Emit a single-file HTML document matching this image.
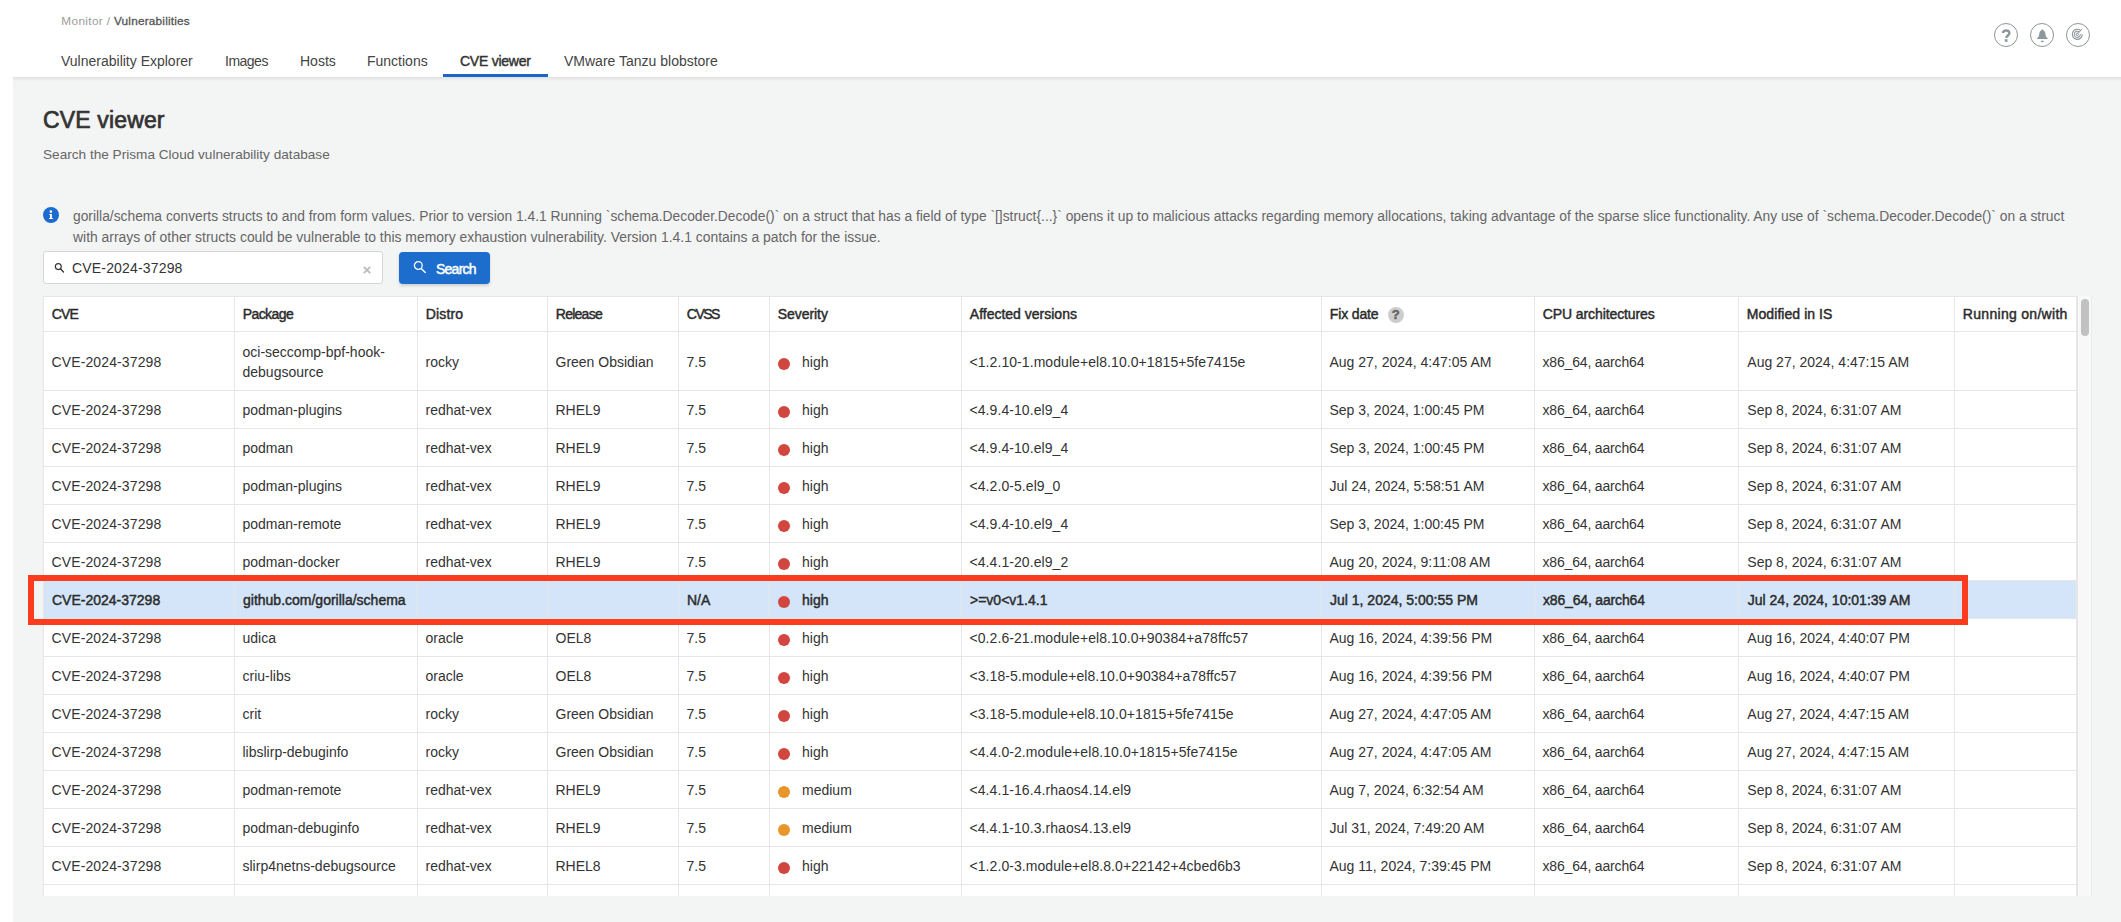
<!DOCTYPE html>
<html><head><meta charset="utf-8">
<style>
*{box-sizing:border-box}
html,body{margin:0;padding:0;width:2121px;height:922px;overflow:hidden;background:#fff;font-family:"Liberation Sans",sans-serif;color:#333;-webkit-font-smoothing:antialiased}
#hdr{position:absolute;left:0;top:0;width:2121px;height:77px;background:#fff;z-index:2}
#shadow{position:absolute;left:13px;top:77px;width:2108px;height:4px;background:linear-gradient(#dfe1e1,rgba(243,244,244,0));z-index:2}
#content{position:absolute;left:13px;top:77px;width:2108px;height:845px;background:#f3f4f4}
.abs{position:absolute;white-space:nowrap}
.crumb{left:61.3px;top:13.5px;font-size:11.8px;color:#9b9b9b;line-height:14px}
.crumb b{color:#555;font-weight:normal;-webkit-text-stroke:0.3px #555;letter-spacing:0.2px}
.tab{top:53px;font-size:14px;color:#444;line-height:16px}
.tab.act{font-weight:normal;color:#333;-webkit-text-stroke:0.45px #333;letter-spacing:-0.25px}
#uline{position:absolute;left:443px;top:74px;width:105px;height:3px;background:#1a66c9;z-index:3}
.ic{position:absolute;top:23px}
.title{left:43px;top:106px;font-size:23px;font-weight:normal;-webkit-text-stroke:0.7px #333;color:#333;line-height:28px;letter-spacing:0.15px}
.sub{left:43px;top:146.5px;font-size:13.62px;color:#666;line-height:16px}
.msg{left:73px;font-size:13.82px;color:#666;line-height:16px}
#inp{position:absolute;left:43px;top:251px;width:340px;height:33px;background:#fff;border:1px solid #d5d5d5;border-radius:3px}
#btn{position:absolute;left:399px;top:252px;width:91px;height:32px;background:#1d6ecc;border-radius:4px;box-shadow:0 2px 3px rgba(0,0,0,.15)}
#tbl{position:absolute;left:43px;top:296px;width:2034px;height:600px;overflow:hidden;background:#fff}
#tblin{position:absolute;left:-43px;top:-296px;width:2121px;height:922px}
.vl{position:absolute;top:296px;width:1px;height:700px;background:#e6e6e6}
.hl{position:absolute;left:43px;width:2034px;height:1px;background:#e6e6e6}
.th{position:absolute;top:306.4px;font-size:14px;font-weight:normal;-webkit-text-stroke:0.45px #2b2b2b;color:#2b2b2b;line-height:16px;white-space:nowrap}
.td{position:absolute;display:flex;align-items:center;padding-top:2px;font-size:14px;color:#333;white-space:nowrap;line-height:20px}
.td.hi{font-weight:normal;-webkit-text-stroke:0.45px #2b2b2b;color:#2b2b2b}
.hibg{position:absolute;left:44px;width:2032px;background:#d4e5f9}
.dot{position:absolute;width:12px;height:12px;border-radius:50%;background:#d2463f}
.dot.med{background:#e8962a}
.qm{position:absolute;left:58px;-webkit-text-stroke:0.5px #666;top:0.6px;width:16px;height:16px;border-radius:50%;background:#cdcdcd;color:#666;font-weight:bold;font-size:13px;font-style:normal;text-align:center;line-height:16px;letter-spacing:0}
#red{position:absolute;left:28px;top:575px;width:1940px;height:50px;border:6px solid #fd3c1f;z-index:5}
#sbtrack{position:absolute;left:2077px;top:296px;width:15px;height:600px;background:#f8f8f8;border-left:1px solid #e6e6e6;border-right:1px solid #ececec}
#sbthumb{position:absolute;left:2081px;top:299px;width:8px;height:37px;background:#c1c1c1;border-radius:4px}
#tblborder{position:absolute;left:43px;top:296px;width:2034px;height:700px;border:1px solid #e6e6e6;pointer-events:none}
</style></head><body>
<div id="content"></div>
<div id="hdr">
  <div class="abs crumb"><span style="letter-spacing:0.35px">Monitor / </span><b>Vulnerabilities</b></div>
  <div class="abs tab" style="left:61px">Vulnerability Explorer</div>
  <div class="abs tab" style="left:225px;letter-spacing:-0.5px">Images</div>
  <div class="abs tab" style="left:300px">Hosts</div>
  <div class="abs tab" style="left:367px">Functions</div>
  <div class="abs tab act" style="left:460px">CVE viewer</div>
  <div class="abs tab" style="left:564px">VMware Tanzu blobstore</div>
  <svg class="ic" style="left:1994px" width="24" height="24" viewBox="0 0 24 24"><circle cx="12" cy="12" r="11.5" fill="none" stroke="#8c9597" stroke-width="1"/><path d="M8.9 10.0 C9.3 8.3 10.6 7.6 12.2 7.6 C14.3 7.6 15.3 8.8 15.3 10.2 C15.3 12.3 12.6 12.5 12.2 14.9" fill="none" stroke="#8e979a" stroke-width="2.5"/><rect x="10.8" y="16.2" width="2.7" height="2.6" fill="#8e979a"/></svg>
  <svg class="ic" style="left:2030px" width="24" height="24" viewBox="0 0 24 24"><circle cx="12" cy="12" r="11.5" fill="none" stroke="#8c9597" stroke-width="1"/><path d="M12.3 6.6 C11.6 6.6 11.3 7.2 11.1 7.6 C9.9 8.0 9.5 9.2 9.3 10.8 L8.9 13.3 L7 15.5 L7 16.1 L17.7 16.1 L17.7 15.5 L15.8 13.3 L15.4 10.8 C15.2 9.2 14.8 8.0 13.6 7.6 C13.4 7.2 13.1 6.6 12.3 6.6 Z" fill="#8e979a"/><path d="M10.8 17.7 h3.0 v0.2 c0 1.9 -3.0 1.9 -3.0 0 z" fill="#8e979a"/></svg>
  <svg class="ic" style="left:2066px" width="24" height="24" viewBox="0 0 24 24"><circle cx="12" cy="12" r="11.5" fill="none" stroke="#8c9597" stroke-width="1"/><g fill="none" stroke="#8e979a"><path stroke-width="1.15" d="M16.3 11.3 A5.0 5.0 0 1 1 14.51 7.47"/><path stroke-width="1.05" d="M14.4 11.3 A3.1 3.1 0 1 1 13.29 8.93"/><path stroke-width="0.95" d="M12.6 11.3 A1.3 1.3 0 1 1 12.14 10.3"/><path stroke-width="1" d="M11.3 11.3 L16.1 5.9"/></g></svg>
</div>
<div id="uline"></div>
<div id="shadow"></div>
<div class="abs title">CVE viewer</div>
<div class="abs sub">Search the Prisma Cloud vulnerability database</div>
<svg style="position:absolute;left:43px;top:207px" width="16" height="16" viewBox="0 0 16 16"><circle cx="8" cy="8" r="8" fill="#1c6cd0"/><circle cx="7.9" cy="4.6" r="1.3" fill="#fff"/><path d="M6.3 7 H8.9 V11 H9.9 V12.1 H6 V11 H7 V8.1 H6.3 Z" fill="#fff"/></svg>
<div class="abs msg" style="top:208px">gorilla/schema converts structs to and from form values. Prior to version 1.4.1 Running `schema.Decoder.Decode()` on a struct that has a field of type `[]struct{...}` opens it up to malicious attacks regarding memory allocations, taking advantage of the sparse slice functionality. Any use of `schema.Decoder.Decode()` on a struct</div>
<div class="abs msg" style="top:229px;font-size:13.91px">with arrays of other structs could be vulnerable to this memory exhaustion vulnerability. Version 1.4.1 contains a patch for the issue.</div>
<div id="inp"></div>
<svg style="position:absolute;left:53px;top:261px" width="13" height="13" viewBox="0 0 13 13"><circle cx="5.3" cy="5.6" r="2.95" fill="none" stroke="#333" stroke-width="1.15"/><path d="M7.4 7.8 L10.5 11.0" stroke="#333" stroke-width="1.3" stroke-linecap="round"/></svg>
<svg style="position:absolute;left:361px;top:264px" width="12" height="12" viewBox="0 0 12 12"><path d="M2.8 2.8 L9.2 9.2 M9.2 2.8 L2.8 9.2" stroke="#bdbdbd" stroke-width="1.9"/></svg>
<div class="abs" style="left:72px;top:260px;font-size:14px;color:#333;line-height:16px;letter-spacing:0.17px">CVE-2024-37298</div>
<div id="btn"></div>
<svg style="position:absolute;left:412px;top:259px" width="16" height="16" viewBox="0 0 16 16"><circle cx="6.3" cy="6.5" r="3.9" fill="none" stroke="#fff" stroke-width="1.3"/><path d="M9.2 9.4 L13.3 13.5" stroke="#fff" stroke-width="1.4" stroke-linecap="round"/></svg>
<div class="abs" style="left:436px;top:260.5px;font-size:14px;font-weight:normal;-webkit-text-stroke:0.45px #fff;color:#fff;line-height:16px;letter-spacing:-0.75px">Search</div>
<div id="tbl"><div id="tblin">
<div id="tblborder"></div>
<div class="hibg" style="top:581px;height:37px"></div>
<div class="vl" style="left:234px"></div>
<div class="vl" style="left:417px"></div>
<div class="vl" style="left:547px"></div>
<div class="vl" style="left:678px"></div>
<div class="vl" style="left:769px"></div>
<div class="vl" style="left:961px"></div>
<div class="vl" style="left:1321px"></div>
<div class="vl" style="left:1534px"></div>
<div class="vl" style="left:1738px"></div>
<div class="vl" style="left:1954px"></div>
<div class="hl" style="top:331px"></div>
<div class="hl" style="top:390px"></div>
<div class="hl" style="top:428px"></div>
<div class="hl" style="top:466px"></div>
<div class="hl" style="top:504px"></div>
<div class="hl" style="top:542px"></div>
<div class="hl" style="top:580px"></div>
<div class="hl" style="top:618px"></div>
<div class="hl" style="top:656px"></div>
<div class="hl" style="top:694px"></div>
<div class="hl" style="top:732px"></div>
<div class="hl" style="top:770px"></div>
<div class="hl" style="top:808px"></div>
<div class="hl" style="top:846px"></div>
<div class="hl" style="top:884px"></div>
<div class="th" style="left:51.8px;letter-spacing:-0.9px"><span>CVE</span></div>
<div class="th" style="left:242.8px;letter-spacing:-0.6px"><span>Package</span></div>
<div class="th" style="left:425.8px;letter-spacing:0.15px"><span>Distro</span></div>
<div class="th" style="left:555.8px;letter-spacing:-0.75px"><span>Release</span></div>
<div class="th" style="left:686.8px;letter-spacing:-1.5px"><span>CVSS</span></div>
<div class="th" style="left:777.8px;letter-spacing:-0.07px"><span>Severity</span></div>
<div class="th" style="left:969.8px;letter-spacing:0px"><span>Affected versions</span></div>
<div class="th" style="left:1329.8px;letter-spacing:-0.14px"><span>Fix date</span><i class="qm">?</i></div>
<div class="th" style="left:1542.8px;letter-spacing:-0.1px"><span>CPU architectures</span></div>
<div class="th" style="left:1746.8px;letter-spacing:0.06px"><span>Modified in IS</span></div>
<div class="th" style="left:1962.8px;letter-spacing:0.3px"><span>Running on/with</span></div>
<div class="td" style="left:51.5px;top:331px;height:59px;letter-spacing:0.12px"><span>CVE-2024-37298</span></div>
<div class="td" style="left:242.5px;top:331px;height:59px"><span>oci-seccomp-bpf-hook-<br>debugsource</span></div>
<div class="td" style="left:425.5px;top:331px;height:59px"><span>rocky</span></div>
<div class="td" style="left:555.5px;top:331px;height:59px"><span>Green Obsidian</span></div>
<div class="td" style="left:686.5px;top:331px;height:59px"><span>7.5</span></div>
<div class="dot" style="left:778px;top:358px"></div>
<div class="td" style="left:802px;top:331px;height:59px"><span>high</span></div>
<div class="td" style="left:969.5px;top:331px;height:59px;letter-spacing:0.07px"><span>&lt;1.2.10-1.module+el8.10.0+1815+5fe7415e</span></div>
<div class="td" style="left:1329.5px;top:331px;height:59px"><span>Aug 27, 2024, 4:47:05 AM</span></div>
<div class="td" style="left:1542.5px;top:331px;height:59px;letter-spacing:-0.17px"><span>x86_64, aarch64</span></div>
<div class="td" style="left:1747.3px;top:331px;height:59px"><span>Aug 27, 2024, 4:47:15 AM</span></div>
<div class="td" style="left:51.5px;top:390px;height:38px;letter-spacing:0.12px"><span>CVE-2024-37298</span></div>
<div class="td" style="left:242.5px;top:390px;height:38px"><span>podman-plugins</span></div>
<div class="td" style="left:425.5px;top:390px;height:38px"><span>redhat-vex</span></div>
<div class="td" style="left:555.5px;top:390px;height:38px"><span>RHEL9</span></div>
<div class="td" style="left:686.5px;top:390px;height:38px"><span>7.5</span></div>
<div class="dot" style="left:778px;top:406px"></div>
<div class="td" style="left:802px;top:390px;height:38px"><span>high</span></div>
<div class="td" style="left:969.5px;top:390px;height:38px;letter-spacing:0.07px"><span>&lt;4.9.4-10.el9_4</span></div>
<div class="td" style="left:1329.5px;top:390px;height:38px"><span>Sep 3, 2024, 1:00:45 PM</span></div>
<div class="td" style="left:1542.5px;top:390px;height:38px;letter-spacing:-0.17px"><span>x86_64, aarch64</span></div>
<div class="td" style="left:1747.3px;top:390px;height:38px"><span>Sep 8, 2024, 6:31:07 AM</span></div>
<div class="td" style="left:51.5px;top:428px;height:38px;letter-spacing:0.12px"><span>CVE-2024-37298</span></div>
<div class="td" style="left:242.5px;top:428px;height:38px"><span>podman</span></div>
<div class="td" style="left:425.5px;top:428px;height:38px"><span>redhat-vex</span></div>
<div class="td" style="left:555.5px;top:428px;height:38px"><span>RHEL9</span></div>
<div class="td" style="left:686.5px;top:428px;height:38px"><span>7.5</span></div>
<div class="dot" style="left:778px;top:444px"></div>
<div class="td" style="left:802px;top:428px;height:38px"><span>high</span></div>
<div class="td" style="left:969.5px;top:428px;height:38px;letter-spacing:0.07px"><span>&lt;4.9.4-10.el9_4</span></div>
<div class="td" style="left:1329.5px;top:428px;height:38px"><span>Sep 3, 2024, 1:00:45 PM</span></div>
<div class="td" style="left:1542.5px;top:428px;height:38px;letter-spacing:-0.17px"><span>x86_64, aarch64</span></div>
<div class="td" style="left:1747.3px;top:428px;height:38px"><span>Sep 8, 2024, 6:31:07 AM</span></div>
<div class="td" style="left:51.5px;top:466px;height:38px;letter-spacing:0.12px"><span>CVE-2024-37298</span></div>
<div class="td" style="left:242.5px;top:466px;height:38px"><span>podman-plugins</span></div>
<div class="td" style="left:425.5px;top:466px;height:38px"><span>redhat-vex</span></div>
<div class="td" style="left:555.5px;top:466px;height:38px"><span>RHEL9</span></div>
<div class="td" style="left:686.5px;top:466px;height:38px"><span>7.5</span></div>
<div class="dot" style="left:778px;top:482px"></div>
<div class="td" style="left:802px;top:466px;height:38px"><span>high</span></div>
<div class="td" style="left:969.5px;top:466px;height:38px;letter-spacing:0.07px"><span>&lt;4.2.0-5.el9_0</span></div>
<div class="td" style="left:1329.5px;top:466px;height:38px"><span>Jul 24, 2024, 5:58:51 AM</span></div>
<div class="td" style="left:1542.5px;top:466px;height:38px;letter-spacing:-0.17px"><span>x86_64, aarch64</span></div>
<div class="td" style="left:1747.3px;top:466px;height:38px"><span>Sep 8, 2024, 6:31:07 AM</span></div>
<div class="td" style="left:51.5px;top:504px;height:38px;letter-spacing:0.12px"><span>CVE-2024-37298</span></div>
<div class="td" style="left:242.5px;top:504px;height:38px"><span>podman-remote</span></div>
<div class="td" style="left:425.5px;top:504px;height:38px"><span>redhat-vex</span></div>
<div class="td" style="left:555.5px;top:504px;height:38px"><span>RHEL9</span></div>
<div class="td" style="left:686.5px;top:504px;height:38px"><span>7.5</span></div>
<div class="dot" style="left:778px;top:520px"></div>
<div class="td" style="left:802px;top:504px;height:38px"><span>high</span></div>
<div class="td" style="left:969.5px;top:504px;height:38px;letter-spacing:0.07px"><span>&lt;4.9.4-10.el9_4</span></div>
<div class="td" style="left:1329.5px;top:504px;height:38px"><span>Sep 3, 2024, 1:00:45 PM</span></div>
<div class="td" style="left:1542.5px;top:504px;height:38px;letter-spacing:-0.17px"><span>x86_64, aarch64</span></div>
<div class="td" style="left:1747.3px;top:504px;height:38px"><span>Sep 8, 2024, 6:31:07 AM</span></div>
<div class="td" style="left:51.5px;top:542px;height:38px;letter-spacing:0.12px"><span>CVE-2024-37298</span></div>
<div class="td" style="left:242.5px;top:542px;height:38px"><span>podman-docker</span></div>
<div class="td" style="left:425.5px;top:542px;height:38px"><span>redhat-vex</span></div>
<div class="td" style="left:555.5px;top:542px;height:38px"><span>RHEL9</span></div>
<div class="td" style="left:686.5px;top:542px;height:38px"><span>7.5</span></div>
<div class="dot" style="left:778px;top:558px"></div>
<div class="td" style="left:802px;top:542px;height:38px"><span>high</span></div>
<div class="td" style="left:969.5px;top:542px;height:38px;letter-spacing:0.07px"><span>&lt;4.4.1-20.el9_2</span></div>
<div class="td" style="left:1329.5px;top:542px;height:38px"><span>Aug 20, 2024, 9:11:08 AM</span></div>
<div class="td" style="left:1542.5px;top:542px;height:38px;letter-spacing:-0.17px"><span>x86_64, aarch64</span></div>
<div class="td" style="left:1747.3px;top:542px;height:38px"><span>Sep 8, 2024, 6:31:07 AM</span></div>
<div class="td hi" style="left:52.0px;top:580px;height:38px;letter-spacing:0px"><span>CVE-2024-37298</span></div>
<div class="td hi" style="left:243.0px;top:580px;height:38px;letter-spacing:0px"><span>github.com/gorilla/schema</span></div>
<div class="td hi" style="left:687.0px;top:580px;height:38px;letter-spacing:0px"><span>N/A</span></div>
<div class="dot" style="left:778px;top:596px"></div>
<div class="td hi" style="left:802px;top:580px;height:38px;letter-spacing:0px"><span>high</span></div>
<div class="td hi" style="left:970.0px;top:580px;height:38px;letter-spacing:0px"><span>&gt;=v0&lt;v1.4.1</span></div>
<div class="td hi" style="left:1330.0px;top:580px;height:38px;letter-spacing:0px"><span>Jul 1, 2024, 5:00:55 PM</span></div>
<div class="td hi" style="left:1543.0px;top:580px;height:38px;letter-spacing:-0.17px"><span>x86_64, aarch64</span></div>
<div class="td hi" style="left:1747.8px;top:580px;height:38px;letter-spacing:0px"><span>Jul 24, 2024, 10:01:39 AM</span></div>
<div class="td" style="left:51.5px;top:618px;height:38px;letter-spacing:0.12px"><span>CVE-2024-37298</span></div>
<div class="td" style="left:242.5px;top:618px;height:38px"><span>udica</span></div>
<div class="td" style="left:425.5px;top:618px;height:38px"><span>oracle</span></div>
<div class="td" style="left:555.5px;top:618px;height:38px"><span>OEL8</span></div>
<div class="td" style="left:686.5px;top:618px;height:38px"><span>7.5</span></div>
<div class="dot" style="left:778px;top:634px"></div>
<div class="td" style="left:802px;top:618px;height:38px"><span>high</span></div>
<div class="td" style="left:969.5px;top:618px;height:38px;letter-spacing:0.07px"><span>&lt;0.2.6-21.module+el8.10.0+90384+a78ffc57</span></div>
<div class="td" style="left:1329.5px;top:618px;height:38px"><span>Aug 16, 2024, 4:39:56 PM</span></div>
<div class="td" style="left:1542.5px;top:618px;height:38px;letter-spacing:-0.17px"><span>x86_64, aarch64</span></div>
<div class="td" style="left:1747.3px;top:618px;height:38px"><span>Aug 16, 2024, 4:40:07 PM</span></div>
<div class="td" style="left:51.5px;top:656px;height:38px;letter-spacing:0.12px"><span>CVE-2024-37298</span></div>
<div class="td" style="left:242.5px;top:656px;height:38px"><span>criu-libs</span></div>
<div class="td" style="left:425.5px;top:656px;height:38px"><span>oracle</span></div>
<div class="td" style="left:555.5px;top:656px;height:38px"><span>OEL8</span></div>
<div class="td" style="left:686.5px;top:656px;height:38px"><span>7.5</span></div>
<div class="dot" style="left:778px;top:672px"></div>
<div class="td" style="left:802px;top:656px;height:38px"><span>high</span></div>
<div class="td" style="left:969.5px;top:656px;height:38px;letter-spacing:0.07px"><span>&lt;3.18-5.module+el8.10.0+90384+a78ffc57</span></div>
<div class="td" style="left:1329.5px;top:656px;height:38px"><span>Aug 16, 2024, 4:39:56 PM</span></div>
<div class="td" style="left:1542.5px;top:656px;height:38px;letter-spacing:-0.17px"><span>x86_64, aarch64</span></div>
<div class="td" style="left:1747.3px;top:656px;height:38px"><span>Aug 16, 2024, 4:40:07 PM</span></div>
<div class="td" style="left:51.5px;top:694px;height:38px;letter-spacing:0.12px"><span>CVE-2024-37298</span></div>
<div class="td" style="left:242.5px;top:694px;height:38px"><span>crit</span></div>
<div class="td" style="left:425.5px;top:694px;height:38px"><span>rocky</span></div>
<div class="td" style="left:555.5px;top:694px;height:38px"><span>Green Obsidian</span></div>
<div class="td" style="left:686.5px;top:694px;height:38px"><span>7.5</span></div>
<div class="dot" style="left:778px;top:710px"></div>
<div class="td" style="left:802px;top:694px;height:38px"><span>high</span></div>
<div class="td" style="left:969.5px;top:694px;height:38px;letter-spacing:0.07px"><span>&lt;3.18-5.module+el8.10.0+1815+5fe7415e</span></div>
<div class="td" style="left:1329.5px;top:694px;height:38px"><span>Aug 27, 2024, 4:47:05 AM</span></div>
<div class="td" style="left:1542.5px;top:694px;height:38px;letter-spacing:-0.17px"><span>x86_64, aarch64</span></div>
<div class="td" style="left:1747.3px;top:694px;height:38px"><span>Aug 27, 2024, 4:47:15 AM</span></div>
<div class="td" style="left:51.5px;top:732px;height:38px;letter-spacing:0.12px"><span>CVE-2024-37298</span></div>
<div class="td" style="left:242.5px;top:732px;height:38px"><span>libslirp-debuginfo</span></div>
<div class="td" style="left:425.5px;top:732px;height:38px"><span>rocky</span></div>
<div class="td" style="left:555.5px;top:732px;height:38px"><span>Green Obsidian</span></div>
<div class="td" style="left:686.5px;top:732px;height:38px"><span>7.5</span></div>
<div class="dot" style="left:778px;top:748px"></div>
<div class="td" style="left:802px;top:732px;height:38px"><span>high</span></div>
<div class="td" style="left:969.5px;top:732px;height:38px;letter-spacing:0.07px"><span>&lt;4.4.0-2.module+el8.10.0+1815+5fe7415e</span></div>
<div class="td" style="left:1329.5px;top:732px;height:38px"><span>Aug 27, 2024, 4:47:05 AM</span></div>
<div class="td" style="left:1542.5px;top:732px;height:38px;letter-spacing:-0.17px"><span>x86_64, aarch64</span></div>
<div class="td" style="left:1747.3px;top:732px;height:38px"><span>Aug 27, 2024, 4:47:15 AM</span></div>
<div class="td" style="left:51.5px;top:770px;height:38px;letter-spacing:0.12px"><span>CVE-2024-37298</span></div>
<div class="td" style="left:242.5px;top:770px;height:38px"><span>podman-remote</span></div>
<div class="td" style="left:425.5px;top:770px;height:38px"><span>redhat-vex</span></div>
<div class="td" style="left:555.5px;top:770px;height:38px"><span>RHEL9</span></div>
<div class="td" style="left:686.5px;top:770px;height:38px"><span>7.5</span></div>
<div class="dot med" style="left:778px;top:786px"></div>
<div class="td" style="left:802px;top:770px;height:38px"><span>medium</span></div>
<div class="td" style="left:969.5px;top:770px;height:38px;letter-spacing:0.07px"><span>&lt;4.4.1-16.4.rhaos4.14.el9</span></div>
<div class="td" style="left:1329.5px;top:770px;height:38px"><span>Aug 7, 2024, 6:32:54 AM</span></div>
<div class="td" style="left:1542.5px;top:770px;height:38px;letter-spacing:-0.17px"><span>x86_64, aarch64</span></div>
<div class="td" style="left:1747.3px;top:770px;height:38px"><span>Sep 8, 2024, 6:31:07 AM</span></div>
<div class="td" style="left:51.5px;top:808px;height:38px;letter-spacing:0.12px"><span>CVE-2024-37298</span></div>
<div class="td" style="left:242.5px;top:808px;height:38px"><span>podman-debuginfo</span></div>
<div class="td" style="left:425.5px;top:808px;height:38px"><span>redhat-vex</span></div>
<div class="td" style="left:555.5px;top:808px;height:38px"><span>RHEL9</span></div>
<div class="td" style="left:686.5px;top:808px;height:38px"><span>7.5</span></div>
<div class="dot med" style="left:778px;top:824px"></div>
<div class="td" style="left:802px;top:808px;height:38px"><span>medium</span></div>
<div class="td" style="left:969.5px;top:808px;height:38px;letter-spacing:0.07px"><span>&lt;4.4.1-10.3.rhaos4.13.el9</span></div>
<div class="td" style="left:1329.5px;top:808px;height:38px"><span>Jul 31, 2024, 7:49:20 AM</span></div>
<div class="td" style="left:1542.5px;top:808px;height:38px;letter-spacing:-0.17px"><span>x86_64, aarch64</span></div>
<div class="td" style="left:1747.3px;top:808px;height:38px"><span>Sep 8, 2024, 6:31:07 AM</span></div>
<div class="td" style="left:51.5px;top:846px;height:38px;letter-spacing:0.12px"><span>CVE-2024-37298</span></div>
<div class="td" style="left:242.5px;top:846px;height:38px"><span>slirp4netns-debugsource</span></div>
<div class="td" style="left:425.5px;top:846px;height:38px"><span>redhat-vex</span></div>
<div class="td" style="left:555.5px;top:846px;height:38px"><span>RHEL8</span></div>
<div class="td" style="left:686.5px;top:846px;height:38px"><span>7.5</span></div>
<div class="dot" style="left:778px;top:862px"></div>
<div class="td" style="left:802px;top:846px;height:38px"><span>high</span></div>
<div class="td" style="left:969.5px;top:846px;height:38px;letter-spacing:0.07px"><span>&lt;1.2.0-3.module+el8.8.0+22142+4cbed6b3</span></div>
<div class="td" style="left:1329.5px;top:846px;height:38px"><span>Aug 11, 2024, 7:39:45 PM</span></div>
<div class="td" style="left:1542.5px;top:846px;height:38px;letter-spacing:-0.17px"><span>x86_64, aarch64</span></div>
<div class="td" style="left:1747.3px;top:846px;height:38px"><span>Sep 8, 2024, 6:31:07 AM</span></div>
</div></div>
<div id="sbtrack"></div>
<div id="sbthumb"></div>
<div id="red"></div>
</body></html>
